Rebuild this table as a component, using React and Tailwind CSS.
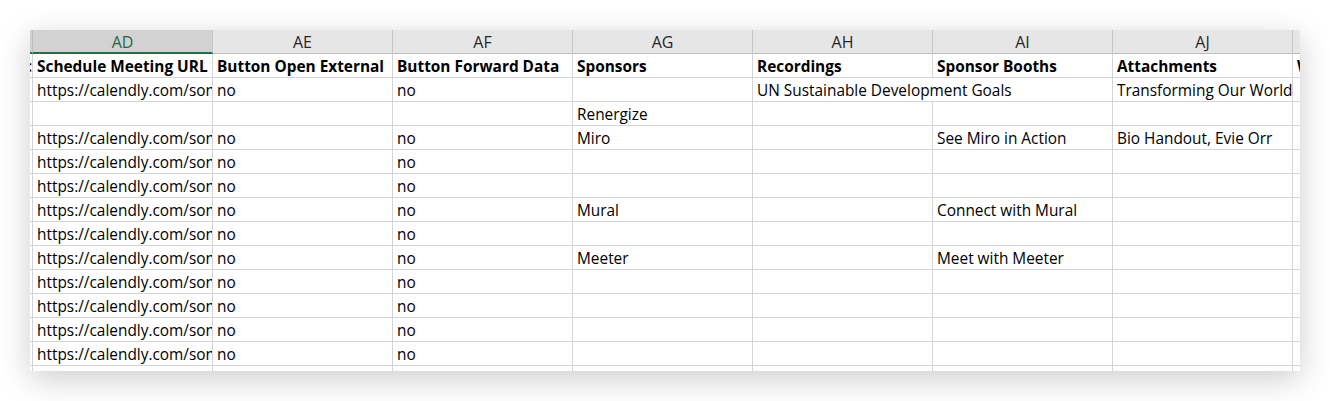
import React from 'react';

const letters = ['AD', 'AE', 'AF', 'AG', 'AH', 'AI', 'AJ'];
const url = 'https://calendly.com/sonia-reyes/meeting';

// each row: [AD, AE, AF, AG, AH, AI, AJ]; span marks AH running into AI
const rows = [
  { bold: true, cells: ['Schedule Meeting URL', 'Button Open External', 'Button Forward Data', 'Sponsors', 'Recordings', 'Sponsor Booths', 'Attachments'], tail: 'W', lead: 'c' },
  { cells: [url, 'no', 'no', '', 'UN Sustainable Development Goals', null, 'Transforming Our World'], span: true },
  { cells: ['', '', '', 'Renergize', '', '', ''] },
  { cells: [url, 'no', 'no', 'Miro', '', 'See Miro in Action', 'Bio Handout, Evie Orr'] },
  { cells: [url, 'no', 'no', '', '', '', ''] },
  { cells: [url, 'no', 'no', '', '', '', ''] },
  { cells: [url, 'no', 'no', 'Mural', '', 'Connect with Mural', ''] },
  { cells: [url, 'no', 'no', '', '', '', ''] },
  { cells: [url, 'no', 'no', 'Meeter', '', 'Meet with Meeter', ''] },
  { cells: [url, 'no', 'no', '', '', '', ''] },
  { cells: [url, 'no', 'no', '', '', '', ''] },
  { cells: [url, 'no', 'no', '', '', '', ''] },
  { cells: [url, 'no', 'no', '', '', '', ''] },
  { cells: ['', '', '', '', '', '', ''] },
];

function Row({ row }) {
  return (
    <div className="grid grid-cols-[3px_repeat(7,180px)_7px] h-[24px]">
      <div className="border-r border-b border-[#d4d4d4] overflow-hidden whitespace-nowrap flex items-center justify-end pt-[2px]">
        {row.lead && <span className="font-bold">{row.lead}</span>}
      </div>
      {row.cells.map((c, i) => {
        if (c === null) return null;
        const wide = row.span && i === 4;
        return (
          <div
            key={i}
            className={`${wide ? 'col-span-2' : ''} border-r border-b border-[#d4d4d4] overflow-hidden whitespace-nowrap flex items-center pl-[4px] pt-[2px] ${row.bold ? 'font-bold' : ''}`}
          >
            {c}
          </div>
        );
      })}
      <div className="border-b border-[#d4d4d4] overflow-hidden whitespace-nowrap flex items-center pl-[4px] pt-[2px] font-bold">
        {row.tail}
      </div>
    </div>
  );
}

export default function App() {
  return (
    <div className="w-[1330px] h-[401px] bg-white pt-[30px] pl-[30px]">
      <div className="w-[1270px] h-[341px] overflow-hidden bg-white shadow-[0_8px_30px_rgba(0,0,0,0.2)] font-['Open_Sans',sans-serif] text-[15.4px] leading-none text-black">
        <div className="grid grid-cols-[3px_repeat(7,180px)_7px] h-[24px] bg-[#e6e6e6] text-[#262626] text-[16px]">
          <div className="bg-[#d2d2d2] border-r border-[#bcbcbc] border-b-2 border-b-[#217346]" />
          {letters.map((l, i) => (
            <div
              key={l}
              className={
                i === 0
                  ? 'bg-[#d2d2d2] text-[#1e6b41] border-r border-[#c6c6c6] border-b-2 border-b-[#217346] flex items-center justify-center pt-[1px]'
                  : 'border-r border-[#c6c6c6] border-b border-b-[#bdbdbd] flex items-center justify-center pt-[1px]'
              }
            >
              {l}
            </div>
          ))}
          <div className="border-b border-[#bdbdbd]" />
        </div>
        {rows.map((r, i) => (
          <Row key={i} row={r} />
        ))}
      </div>
    </div>
  );
}
